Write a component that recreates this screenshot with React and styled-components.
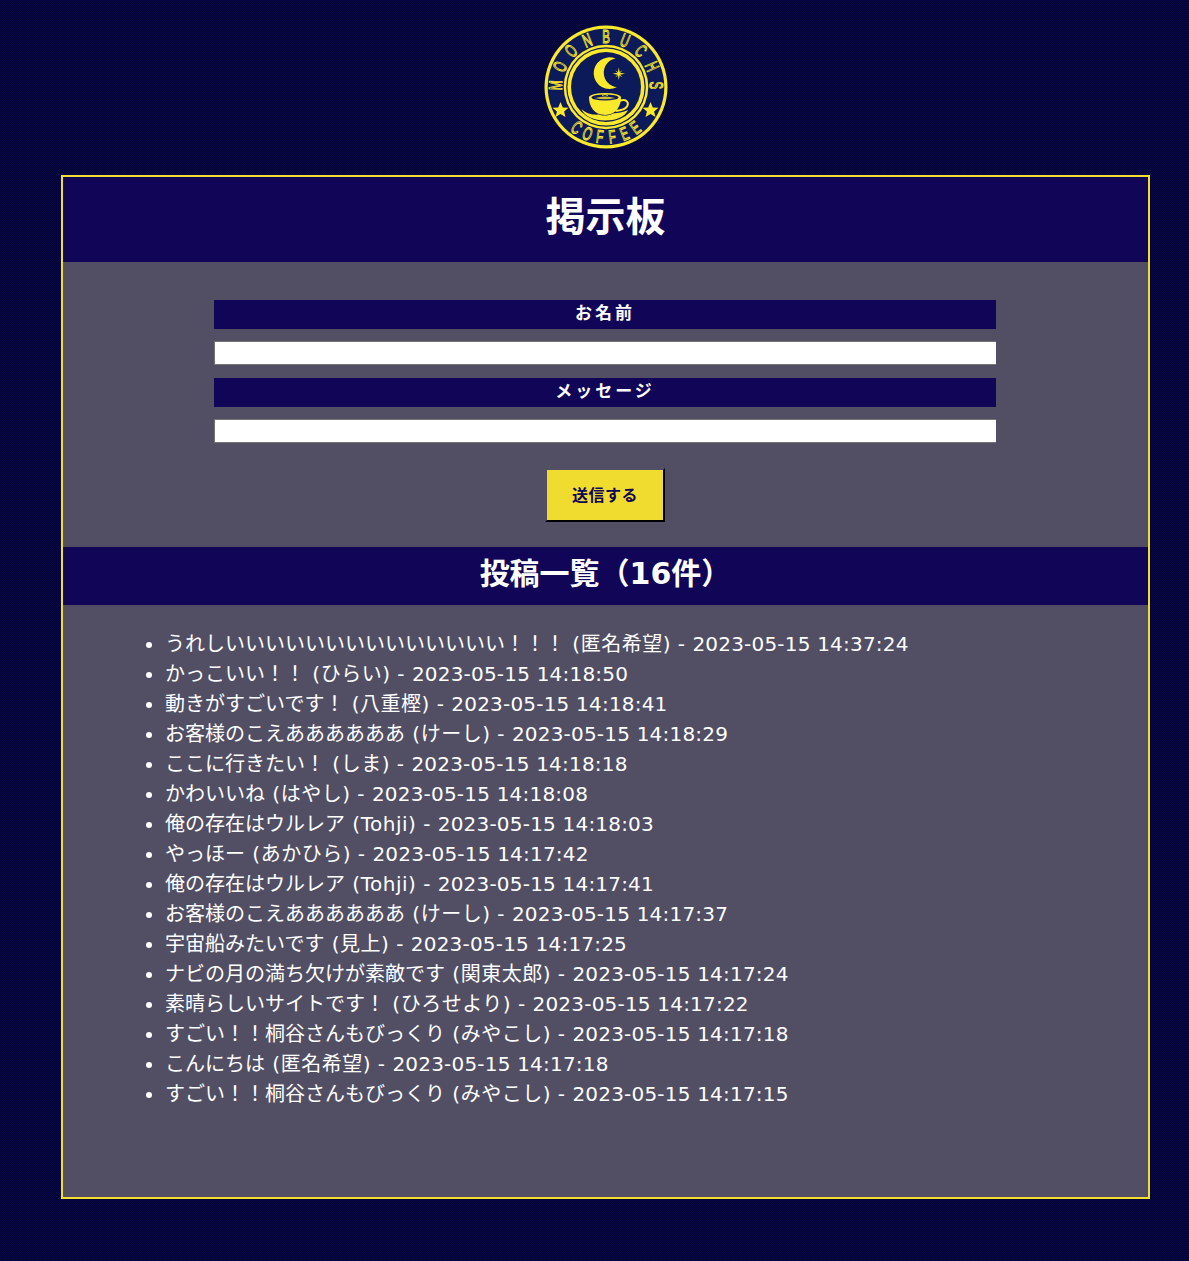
import React from "react";
import styled, { createGlobalStyle } from "styled-components";

const posts = [
  ["うれしいいいいいいいいいいいいいい！！！", "匿名希望", "2023-05-15 14:37:24"],
  ["かっこいい！！", "ひらい", "2023-05-15 14:18:50"],
  ["動きがすごいです！", "八重樫", "2023-05-15 14:18:41"],
  ["お客様のこえああああああ", "けーし", "2023-05-15 14:18:29"],
  ["ここに行きたい！", "しま", "2023-05-15 14:18:18"],
  ["かわいいね", "はやし", "2023-05-15 14:18:08"],
  ["俺の存在はウルレア", "Tohji", "2023-05-15 14:18:03"],
  ["やっほー", "あかひら", "2023-05-15 14:17:42"],
  ["俺の存在はウルレア", "Tohji", "2023-05-15 14:17:41"],
  ["お客様のこえああああああ", "けーし", "2023-05-15 14:17:37"],
  ["宇宙船みたいです", "見上", "2023-05-15 14:17:25"],
  ["ナビの月の満ち欠けが素敵です", "関東太郎", "2023-05-15 14:17:24"],
  ["素晴らしいサイトです！", "ひろせより", "2023-05-15 14:17:22"],
  ["すごい！！桐谷さんもびっくり", "みやこし", "2023-05-15 14:17:18"],
  ["こんにちは", "匿名希望", "2023-05-15 14:17:18"],
  ["すごい！！桐谷さんもびっくり", "みやこし", "2023-05-15 14:17:15"]
];

const GlobalStyle = createGlobalStyle`
  html, body {
    margin: 0;
    background: repeating-conic-gradient(#030433 0 25%, #070845 0 50%) 0 0 / 2px 2px;
  }
  body {
    font-family: "DejaVu Sans", "Noto Sans CJK JP", sans-serif;
  }
`;

const Page = styled.div`
  width: 1089px;
  height: 1261px;
  margin-left: 61px;
  padding-top: 25px;
  box-sizing: border-box;
`;

const LogoRow = styled.div`
  display: flex;
  justify-content: center;
  height: 150px;
`;

const Board = styled.main`
  border: 2px solid #f1de2f;
  height: 1024px;
  box-sizing: border-box;
  background: #524f65;
`;

const Title = styled.h1`
  margin: 0;
  height: 85px;
  background: #110558;
  color: #fff;
  font-size: 40px;
  font-weight: 700;
  line-height: 80px;
  text-align: center;
`;

const Form = styled.form`
  width: 782px;
  height: 285px;
  margin-left: 151px;
  padding-top: 38px;
  box-sizing: border-box;
  display: flex;
  flex-direction: column;
  align-items: center;
`;

const Label = styled.label`
  width: 100%;
  height: 29px;
  background: #110558;
  color: #fff;
  font-size: 17px;
  font-weight: 700;
  letter-spacing: 3px;
  line-height: 27px;
  text-align: center;
`;

const Input = styled.input`
  display: block;
  width: 100%;
  height: 24px;
  margin: 12px 0 13px;
  padding: 0;
  box-sizing: border-box;
  background: #fff;
  border: 1px solid #767676;
  border-width: 1px 0 1px 1px;
  border-radius: 0;
`;

const SendButton = styled.button`
  width: 120px;
  height: 54px;
  margin-top: 12px;
  padding: 0 0 2px;
  background: #efdc2f;
  color: #110558;
  border-style: solid;
  border-width: 2px;
  border-color: #524f65 #000 #000 #524f65;
  font-family: inherit;
  font-size: 16px;
  font-weight: 700;
  letter-spacing: 0.5px;
`;

const SectionTitle = styled.h2`
  margin: 0;
  height: 58px;
  background: #110558;
  color: #fff;
  font-size: 30px;
  font-weight: 700;
  line-height: 54px;
  text-align: center;
`;

const PostList = styled.ul`
  margin: 24px 0 0;
  padding: 0 0 0 102px;
  color: #fff;
  font-size: 20px;
  line-height: 30px;
`;

const Post = styled.li`
  height: 30px;
`;

const Author = styled.span`
  margin-left: 1px;
  letter-spacing: 0.5px;
`;

const PostDate = styled.span`
  letter-spacing: 0.2px;
`;

const yellow = "#fbe92c";
const navy = "#0c1a5a";

const LogoLetter = ({ char, angle, radius }) => (
  <text
    transform={`translate(62 62) rotate(${angle}) translate(0 ${radius}) scale(0.62 1)`}
    textAnchor="middle"
    fontFamily="'Liberation Sans', sans-serif"
    fontSize="18.5"
    fill={navy}
    stroke={yellow}
    strokeWidth="1.1"
  >
    {char}
  </text>
);

const Star = ({ x }) => (
  <path
    transform={`translate(${x} 85)`}
    d="M0 -8 L2.3 -2.6 L8 -2.2 L3.6 1.5 L5 7 L0 4 L-5 7 L-3.6 1.5 L-8 -2.2 L-2.3 -2.6 Z"
    fill={yellow}
  />
);

function Logo() {
  return (
    <svg width="124" height="124" viewBox="0 0 124 124">
      <circle cx="62" cy="62" r="61.5" fill={yellow} />
      <circle cx="62" cy="62" r="58.3" fill={navy} />
      <circle cx="62" cy="62" r="42.3" fill={yellow} />
      <circle cx="62" cy="62" r="39.8" fill={navy} />
      <circle cx="62" cy="62" r="38.6" fill={yellow} />
      <circle cx="62" cy="62" r="35" fill={navy} />
      {"MOONBUCHS".split("").map((char, i) => (
        <LogoLetter key={i} char={char} angle={-88 + i * 22} radius={-44} />
      ))}
      {"COFFEE".split("").map((char, i) => (
        <LogoLetter key={i} char={char} angle={36 - i * 14.4} radius={56.5} />
      ))}
      <path d="M71.5 33.5 A15.8 15.8 0 1 0 73 62 A14.4 14.4 0 0 1 71.5 33.5 Z" fill={yellow} />
      <path d="M74.8 42.5 L75.8 47.8 L81 48.8 L75.8 49.8 L74.8 55 L73.8 49.8 L68.6 48.8 L73.8 47.8 Z" fill={yellow} />
      <path d="M72 45.8 L77.6 51.8 M77.6 45.8 L72 51.8" stroke={yellow} strokeWidth="0.8" />
      <path d="M45 72.5 A16 4.5 0 0 1 77 72.5 C77 81 72 90 61 90 C50 90 45 81 45 72.5 Z" fill={yellow} />
      <ellipse cx="61" cy="72.4" rx="13.5" ry="3" fill={navy} />
      <path d="M51 73 Q61 70 71 73 Q61 75.5 51 73 Z" fill={yellow} opacity="0.8" />
      <path d="M58 70.5 Q61 68.5 64 70.5" fill="none" stroke={yellow} strokeWidth="0.9" />
      <path d="M75.5 76 C81.5 73 85.5 77 83 81.5 C81 85 76 85.5 71.5 86" fill="none" stroke={yellow} strokeWidth="2" />
      <path d="M37.5 84 C43 89.5 50 90 55 89.5 C58 91 65 91 69 88.5 C74 88 79 87.5 84 85 C81 92.5 71 95.5 61 95.5 C50 95.5 40.5 91.5 37.5 84 Z" fill={yellow} />
      <Star x={16.5} />
      <Star x={106.5} />
    </svg>
  );
}

export default function App() {
  return (
    <Page>
      <GlobalStyle />
      <LogoRow>
        <Logo />
      </LogoRow>
      <Board>
        <Title>掲示板</Title>
        <Form>
          <Label>お名前</Label>
          <Input type="text" />
          <Label>メッセージ</Label>
          <Input type="text" />
          <SendButton type="button">送信する</SendButton>
        </Form>
        <SectionTitle>投稿一覧（16件）</SectionTitle>
        <PostList>
          {posts.map(([message, name, date], i) => (
            <Post key={i}>
              {message} <Author>({name}) - </Author><PostDate>{date}</PostDate>
            </Post>
          ))}
        </PostList>
      </Board>
    </Page>
  );
}
